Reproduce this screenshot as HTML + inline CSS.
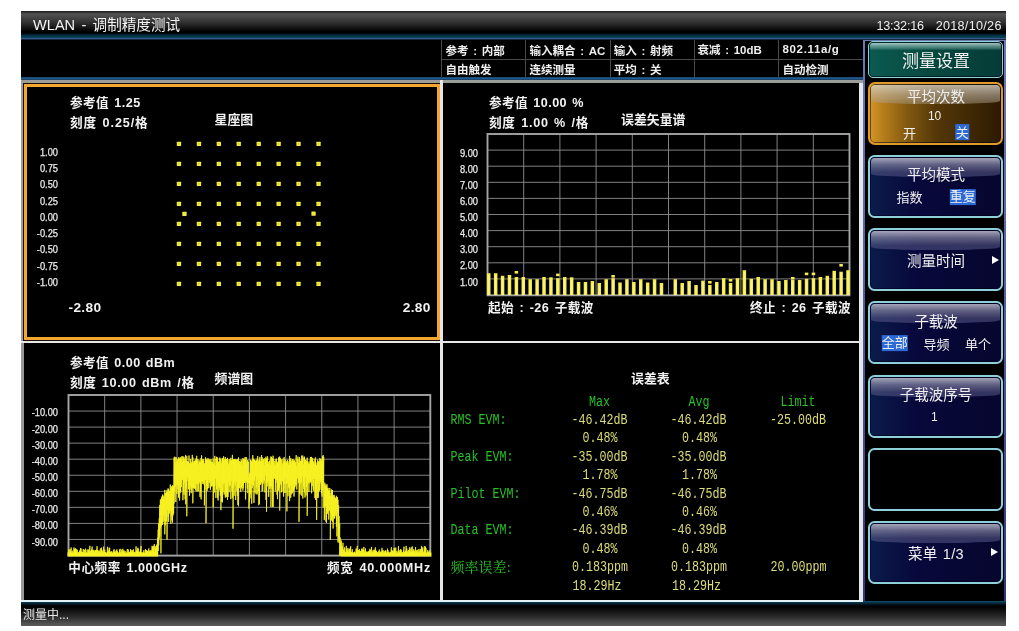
<!DOCTYPE html>
<html lang="zh-CN">
<head>
<meta charset="utf-8">
<title>WLAN - 调制精度测试</title>
<style>
html,body{margin:0;padding:0;background:#fff;}
body{width:1019px;height:631px;position:relative;overflow:hidden;font-family:"Liberation Sans","Noto Sans CJK SC",sans-serif;color:#fff;}
#scr{position:absolute;left:21px;top:11px;width:984.7px;height:614.7px;background:#000;overflow:hidden;will-change:transform;transform:translateZ(0);}
.a{position:absolute;}
.t{position:absolute;white-space:nowrap;line-height:1;}
#title{position:absolute;left:0;top:0;width:984.7px;height:29px;
 background:linear-gradient(to bottom,#161616 0,#2c2c2c 1px,#545252 3px,#4a4949 5.5px,#2e2e2e 12px,#141414 17px,#000 20.5px,#000 22px,#04283a 24px,#094056 26px,#0c4560 27px,#38598f 27.4px,#2c4a7c 28.2px,#000 28.8px);}
#title .tt{left:12px;top:6.8px;font-size:14.6px;color:#f4f4f4;word-spacing:2.2px;}
#title .tm{top:8.8px;font-size:12.6px;color:#eee;}
#info{position:absolute;left:0;top:29px;width:842px;height:37px;background:#000;}
#infoline{position:absolute;left:0;top:66px;width:842px;height:3px;background:linear-gradient(to bottom,#18426a,#21598a 50%,#143a5e);}
.ic{position:absolute;font-size:11.5px;word-spacing:1.5px;font-weight:bold;color:#f0f0f0;white-space:nowrap;line-height:1;}
.vl{position:absolute;width:1px;background:#4a4a4a;top:29px;height:37px;}
.hl{position:absolute;height:1px;background:#4a4a4a;left:420px;width:422px;top:48px;}
/* panels */
.pb{position:absolute;background:#000;}
.lab{font-size:12.6px;letter-spacing:.45px;word-spacing:1.2px;font-weight:bold;color:#f2f2f2;}
.ptitle{font-size:12.9px;font-weight:bold;color:#f2f2f2;}
.yl{position:absolute;font-size:10px;transform:scaleX(.93);-webkit-text-stroke:.25px #e8e8e8;transform-origin:100% 50%;color:#ececec;text-align:right;width:40px;line-height:1;white-space:nowrap;}
.xl{font-size:12.6px;letter-spacing:.45px;word-spacing:1.5px;font-weight:bold;color:#f2f2f2;}
/* sidebar */
#side{position:absolute;left:842px;top:29px;width:142.7px;height:560.7px;background:linear-gradient(to bottom,#6c7ab2,#5464a4 40%,#2c3a7c 100%);}#side i{position:absolute;left:2px;right:1.6px;top:1px;bottom:0;background:#000;}
.btn{position:absolute;left:847.4px;width:135px;height:63.2px;box-sizing:border-box;border:2px solid #8ed0d9;border-radius:6.5px;overflow:hidden;box-shadow:inset 0 0 0 1px rgba(0,0,20,.55);
 background:linear-gradient(to right,#0a1c4a 0,#08083c 35%,#06062e 100%);}
.btn .gl{position:absolute;left:1px;right:1px;top:1px;height:19px;background:linear-gradient(to bottom,rgba(180,180,198,.9) 0,rgba(135,135,165,.7) 35%,rgba(90,90,135,.55) 75%,rgba(80,80,130,.6) 100%);border-radius:4px 4px 40% 40% / 4px 4px 3px 3px;}
.btn .h{position:absolute;left:0;right:0;text-align:center;font-size:14.5px;color:#f0f0f0;line-height:1;white-space:nowrap;}
.btn .s{position:absolute;font-size:13px;color:#f0f0f0;line-height:1;white-space:nowrap;transform:translate(-50%,-50%);}
.btn .sel{background:#2c6ad8;padding:1.4px 0.2px;}
.arr{position:absolute;width:0;height:0;border-left:7px solid #fff;border-top:4.5px solid transparent;border-bottom:4.5px solid transparent;}
/* error table */
.et{position:absolute;font-family:"Liberation Mono","Noto Serif CJK SC",monospace;font-size:11.67px;line-height:1;white-space:pre;transform:scaleY(1.28);transform-origin:0 50%;}
.g{color:#28c028;}
.y{color:#dcdc78;}
#status{position:absolute;left:0;top:589.7px;width:984.7px;height:25px;background:linear-gradient(to bottom,#14506e 0,#0b3a50 1.2px,#062433 2.5px,#020c12 4px,#000 5.5px,#0a0a0a 8px,#2c2c2c 16px,#535353 23px,#5c5a5a 25px);}
#status .st{left:2px;top:8.1px;font-size:12px;color:#e8e8e8;}
</style>
</head>
<body>
<div id="scr">
  <div id="title"><div class="t tt">WLAN - 调制精度测试</div><div class="t tm" style="left:855.4px;letter-spacing:-.2px">13:32:16</div><div class="t tm" style="right:4px;letter-spacing:.3px">2018/10/26</div></div>
  <div id="info"></div>
  <div class="vl" style="left:420px"></div><div class="vl" style="left:504px"></div><div class="vl" style="left:589px"></div><div class="vl" style="left:673px"></div><div class="vl" style="left:757px"></div>
  <div class="hl"></div>
  <div class="ic" style="left:424.5px;top:34.5px">参考 : 内部</div>
  <div class="ic" style="left:424.5px;top:54px">自由触发</div>
  <div class="ic" style="left:508.5px;top:34.5px">输入耦合 : AC</div>
  <div class="ic" style="left:508.5px;top:54px">连续测量</div>
  <div class="ic" style="left:592.7px;top:34.5px">输入 : 射频</div>
  <div class="ic" style="left:592.7px;top:54px">平均 : 关</div>
  <div class="ic" style="left:676.5px;top:33.5px">衰减 : 10dB</div>
  <div class="ic" style="left:761.5px;top:33px;letter-spacing:.65px">802.11a/g</div>
  <div class="ic" style="left:761.5px;top:54px">自动检测</div>
  <div id="infoline"></div>

  <!-- panel frame: gray outer -->
  <div class="a" style="left:0;top:69px;width:842px;height:521.7px;background:#e6e6e6;"></div>
  <!-- panel 1 (selected) -->
  <div class="a" style="left:0;top:69px;width:419px;height:260.5px;background:#9c9c98;"></div>
  <div class="a" style="left:2px;top:72px;width:417px;height:257.5px;background:#1a0e08;"></div>
  <div class="a" style="left:3px;top:73px;width:415.5px;height:256px;background:#f2a72e;"></div>
  <div class="pb" style="left:6px;top:76px;width:409.5px;height:250px;"></div>
  <!-- panel 2 -->
  <div class="a" style="left:422px;top:69px;width:420px;height:3px;background:#9c9e9a;"></div>
  <div class="pb" style="left:422px;top:72px;width:416px;height:257.5px;"></div>
  <!-- panel 3 -->
  <div class="pb" style="left:2.6px;top:332px;width:416.4px;height:257.3px;"></div>
  <div class="a" style="left:0;top:332px;width:2.6px;height:257.3px;background:#989898;"></div>
  <!-- panel 4 -->
  <div class="pb" style="left:422px;top:332px;width:416px;height:257.3px;"></div>

  <!-- panel 1 content -->
  <div class="t lab" style="left:49px;top:86.1px">参考值 1.25</div>
  <div class="t lab" style="left:49px;top:106.1px;letter-spacing:.9px">刻度 0.25/格</div>
  <div class="t ptitle" style="left:193.5px;top:102.5px">星座图</div>
  <div class="yl" style="left:-2.7px;top:137.00px">1.00</div>
  <div class="yl" style="left:-2.7px;top:153.22px">0.75</div>
  <div class="yl" style="left:-2.7px;top:169.44px">0.50</div>
  <div class="yl" style="left:-2.7px;top:185.66px">0.25</div>
  <div class="yl" style="left:-2.7px;top:201.88px">0.00</div>
  <div class="yl" style="left:-2.7px;top:218.10px">-0.25</div>
  <div class="yl" style="left:-2.7px;top:234.32px">-0.50</div>
  <div class="yl" style="left:-2.7px;top:250.54px">-0.75</div>
  <div class="yl" style="left:-2.7px;top:266.76px">-1.00</div>
  <div class="t xl" style="left:47.5px;top:290.2px;font-size:13.7px;letter-spacing:.35px">-2.80</div>
  <div class="t xl" style="right:574.9px;top:290.2px;font-size:13.7px;letter-spacing:.35px">2.80</div>
  <svg class="a" style="left:-21px;top:-11px" width="1019" height="631" viewBox="0 0 1019 631">
<rect x="176.8" y="141.8" width="4.3" height="4.3" rx=".5" fill="#f3ec3e"/>
<rect x="178.4" y="143.1" width="1.2" height="1.6" fill="#d8cc2c"/>
<rect x="196.8" y="141.8" width="4.3" height="4.3" rx=".5" fill="#f3ec3e"/>
<rect x="198.3" y="143.1" width="1.2" height="1.6" fill="#d8cc2c"/>
<rect x="216.7" y="141.8" width="4.3" height="4.3" rx=".5" fill="#f3ec3e"/>
<rect x="218.3" y="143.1" width="1.2" height="1.6" fill="#d8cc2c"/>
<rect x="236.6" y="141.8" width="4.3" height="4.3" rx=".5" fill="#f3ec3e"/>
<rect x="238.2" y="143.1" width="1.2" height="1.6" fill="#d8cc2c"/>
<rect x="256.6" y="141.8" width="4.3" height="4.3" rx=".5" fill="#f3ec3e"/>
<rect x="258.1" y="143.1" width="1.2" height="1.6" fill="#d8cc2c"/>
<rect x="276.5" y="141.8" width="4.3" height="4.3" rx=".5" fill="#f3ec3e"/>
<rect x="278.0" y="143.1" width="1.2" height="1.6" fill="#d8cc2c"/>
<rect x="296.4" y="141.8" width="4.3" height="4.3" rx=".5" fill="#f3ec3e"/>
<rect x="298.0" y="143.1" width="1.2" height="1.6" fill="#d8cc2c"/>
<rect x="316.4" y="141.8" width="4.3" height="4.3" rx=".5" fill="#f3ec3e"/>
<rect x="317.9" y="143.1" width="1.2" height="1.6" fill="#d8cc2c"/>
<rect x="176.8" y="161.8" width="4.3" height="4.3" rx=".5" fill="#f3ec3e"/>
<rect x="178.4" y="163.1" width="1.2" height="1.6" fill="#d8cc2c"/>
<rect x="196.8" y="161.8" width="4.3" height="4.3" rx=".5" fill="#f3ec3e"/>
<rect x="198.3" y="163.1" width="1.2" height="1.6" fill="#d8cc2c"/>
<rect x="216.7" y="161.8" width="4.3" height="4.3" rx=".5" fill="#f3ec3e"/>
<rect x="218.3" y="163.1" width="1.2" height="1.6" fill="#d8cc2c"/>
<rect x="236.6" y="161.8" width="4.3" height="4.3" rx=".5" fill="#f3ec3e"/>
<rect x="238.2" y="163.1" width="1.2" height="1.6" fill="#d8cc2c"/>
<rect x="256.6" y="161.8" width="4.3" height="4.3" rx=".5" fill="#f3ec3e"/>
<rect x="258.1" y="163.1" width="1.2" height="1.6" fill="#d8cc2c"/>
<rect x="276.5" y="161.8" width="4.3" height="4.3" rx=".5" fill="#f3ec3e"/>
<rect x="278.0" y="163.1" width="1.2" height="1.6" fill="#d8cc2c"/>
<rect x="296.4" y="161.8" width="4.3" height="4.3" rx=".5" fill="#f3ec3e"/>
<rect x="298.0" y="163.1" width="1.2" height="1.6" fill="#d8cc2c"/>
<rect x="316.4" y="161.8" width="4.3" height="4.3" rx=".5" fill="#f3ec3e"/>
<rect x="317.9" y="163.1" width="1.2" height="1.6" fill="#d8cc2c"/>
<rect x="176.8" y="181.8" width="4.3" height="4.3" rx=".5" fill="#f3ec3e"/>
<rect x="178.4" y="183.1" width="1.2" height="1.6" fill="#d8cc2c"/>
<rect x="196.8" y="181.8" width="4.3" height="4.3" rx=".5" fill="#f3ec3e"/>
<rect x="198.3" y="183.1" width="1.2" height="1.6" fill="#d8cc2c"/>
<rect x="216.7" y="181.8" width="4.3" height="4.3" rx=".5" fill="#f3ec3e"/>
<rect x="218.3" y="183.1" width="1.2" height="1.6" fill="#d8cc2c"/>
<rect x="236.6" y="181.8" width="4.3" height="4.3" rx=".5" fill="#f3ec3e"/>
<rect x="238.2" y="183.1" width="1.2" height="1.6" fill="#d8cc2c"/>
<rect x="256.6" y="181.8" width="4.3" height="4.3" rx=".5" fill="#f3ec3e"/>
<rect x="258.1" y="183.1" width="1.2" height="1.6" fill="#d8cc2c"/>
<rect x="276.5" y="181.8" width="4.3" height="4.3" rx=".5" fill="#f3ec3e"/>
<rect x="278.0" y="183.1" width="1.2" height="1.6" fill="#d8cc2c"/>
<rect x="296.4" y="181.8" width="4.3" height="4.3" rx=".5" fill="#f3ec3e"/>
<rect x="298.0" y="183.1" width="1.2" height="1.6" fill="#d8cc2c"/>
<rect x="316.4" y="181.8" width="4.3" height="4.3" rx=".5" fill="#f3ec3e"/>
<rect x="317.9" y="183.1" width="1.2" height="1.6" fill="#d8cc2c"/>
<rect x="176.8" y="201.8" width="4.3" height="4.3" rx=".5" fill="#f3ec3e"/>
<rect x="178.4" y="203.1" width="1.2" height="1.6" fill="#d8cc2c"/>
<rect x="196.8" y="201.8" width="4.3" height="4.3" rx=".5" fill="#f3ec3e"/>
<rect x="198.3" y="203.1" width="1.2" height="1.6" fill="#d8cc2c"/>
<rect x="216.7" y="201.8" width="4.3" height="4.3" rx=".5" fill="#f3ec3e"/>
<rect x="218.3" y="203.1" width="1.2" height="1.6" fill="#d8cc2c"/>
<rect x="236.6" y="201.8" width="4.3" height="4.3" rx=".5" fill="#f3ec3e"/>
<rect x="238.2" y="203.1" width="1.2" height="1.6" fill="#d8cc2c"/>
<rect x="256.6" y="201.8" width="4.3" height="4.3" rx=".5" fill="#f3ec3e"/>
<rect x="258.1" y="203.1" width="1.2" height="1.6" fill="#d8cc2c"/>
<rect x="276.5" y="201.8" width="4.3" height="4.3" rx=".5" fill="#f3ec3e"/>
<rect x="278.0" y="203.1" width="1.2" height="1.6" fill="#d8cc2c"/>
<rect x="296.4" y="201.8" width="4.3" height="4.3" rx=".5" fill="#f3ec3e"/>
<rect x="298.0" y="203.1" width="1.2" height="1.6" fill="#d8cc2c"/>
<rect x="316.4" y="201.8" width="4.3" height="4.3" rx=".5" fill="#f3ec3e"/>
<rect x="317.9" y="203.1" width="1.2" height="1.6" fill="#d8cc2c"/>
<rect x="176.8" y="221.8" width="4.3" height="4.3" rx=".5" fill="#f3ec3e"/>
<rect x="178.4" y="223.1" width="1.2" height="1.6" fill="#d8cc2c"/>
<rect x="196.8" y="221.8" width="4.3" height="4.3" rx=".5" fill="#f3ec3e"/>
<rect x="198.3" y="223.1" width="1.2" height="1.6" fill="#d8cc2c"/>
<rect x="216.7" y="221.8" width="4.3" height="4.3" rx=".5" fill="#f3ec3e"/>
<rect x="218.3" y="223.1" width="1.2" height="1.6" fill="#d8cc2c"/>
<rect x="236.6" y="221.8" width="4.3" height="4.3" rx=".5" fill="#f3ec3e"/>
<rect x="238.2" y="223.1" width="1.2" height="1.6" fill="#d8cc2c"/>
<rect x="256.6" y="221.8" width="4.3" height="4.3" rx=".5" fill="#f3ec3e"/>
<rect x="258.1" y="223.1" width="1.2" height="1.6" fill="#d8cc2c"/>
<rect x="276.5" y="221.8" width="4.3" height="4.3" rx=".5" fill="#f3ec3e"/>
<rect x="278.0" y="223.1" width="1.2" height="1.6" fill="#d8cc2c"/>
<rect x="296.4" y="221.8" width="4.3" height="4.3" rx=".5" fill="#f3ec3e"/>
<rect x="298.0" y="223.1" width="1.2" height="1.6" fill="#d8cc2c"/>
<rect x="316.4" y="221.8" width="4.3" height="4.3" rx=".5" fill="#f3ec3e"/>
<rect x="317.9" y="223.1" width="1.2" height="1.6" fill="#d8cc2c"/>
<rect x="176.8" y="241.8" width="4.3" height="4.3" rx=".5" fill="#f3ec3e"/>
<rect x="178.4" y="243.1" width="1.2" height="1.6" fill="#d8cc2c"/>
<rect x="196.8" y="241.8" width="4.3" height="4.3" rx=".5" fill="#f3ec3e"/>
<rect x="198.3" y="243.1" width="1.2" height="1.6" fill="#d8cc2c"/>
<rect x="216.7" y="241.8" width="4.3" height="4.3" rx=".5" fill="#f3ec3e"/>
<rect x="218.3" y="243.1" width="1.2" height="1.6" fill="#d8cc2c"/>
<rect x="236.6" y="241.8" width="4.3" height="4.3" rx=".5" fill="#f3ec3e"/>
<rect x="238.2" y="243.1" width="1.2" height="1.6" fill="#d8cc2c"/>
<rect x="256.6" y="241.8" width="4.3" height="4.3" rx=".5" fill="#f3ec3e"/>
<rect x="258.1" y="243.1" width="1.2" height="1.6" fill="#d8cc2c"/>
<rect x="276.5" y="241.8" width="4.3" height="4.3" rx=".5" fill="#f3ec3e"/>
<rect x="278.0" y="243.1" width="1.2" height="1.6" fill="#d8cc2c"/>
<rect x="296.4" y="241.8" width="4.3" height="4.3" rx=".5" fill="#f3ec3e"/>
<rect x="298.0" y="243.1" width="1.2" height="1.6" fill="#d8cc2c"/>
<rect x="316.4" y="241.8" width="4.3" height="4.3" rx=".5" fill="#f3ec3e"/>
<rect x="317.9" y="243.1" width="1.2" height="1.6" fill="#d8cc2c"/>
<rect x="176.8" y="261.8" width="4.3" height="4.3" rx=".5" fill="#f3ec3e"/>
<rect x="178.4" y="263.1" width="1.2" height="1.6" fill="#d8cc2c"/>
<rect x="196.8" y="261.8" width="4.3" height="4.3" rx=".5" fill="#f3ec3e"/>
<rect x="198.3" y="263.1" width="1.2" height="1.6" fill="#d8cc2c"/>
<rect x="216.7" y="261.8" width="4.3" height="4.3" rx=".5" fill="#f3ec3e"/>
<rect x="218.3" y="263.1" width="1.2" height="1.6" fill="#d8cc2c"/>
<rect x="236.6" y="261.8" width="4.3" height="4.3" rx=".5" fill="#f3ec3e"/>
<rect x="238.2" y="263.1" width="1.2" height="1.6" fill="#d8cc2c"/>
<rect x="256.6" y="261.8" width="4.3" height="4.3" rx=".5" fill="#f3ec3e"/>
<rect x="258.1" y="263.1" width="1.2" height="1.6" fill="#d8cc2c"/>
<rect x="276.5" y="261.8" width="4.3" height="4.3" rx=".5" fill="#f3ec3e"/>
<rect x="278.0" y="263.1" width="1.2" height="1.6" fill="#d8cc2c"/>
<rect x="296.4" y="261.8" width="4.3" height="4.3" rx=".5" fill="#f3ec3e"/>
<rect x="298.0" y="263.1" width="1.2" height="1.6" fill="#d8cc2c"/>
<rect x="316.4" y="261.8" width="4.3" height="4.3" rx=".5" fill="#f3ec3e"/>
<rect x="317.9" y="263.1" width="1.2" height="1.6" fill="#d8cc2c"/>
<rect x="176.8" y="281.8" width="4.3" height="4.3" rx=".5" fill="#f3ec3e"/>
<rect x="178.4" y="283.1" width="1.2" height="1.6" fill="#d8cc2c"/>
<rect x="196.8" y="281.8" width="4.3" height="4.3" rx=".5" fill="#f3ec3e"/>
<rect x="198.3" y="283.1" width="1.2" height="1.6" fill="#d8cc2c"/>
<rect x="216.7" y="281.8" width="4.3" height="4.3" rx=".5" fill="#f3ec3e"/>
<rect x="218.3" y="283.1" width="1.2" height="1.6" fill="#d8cc2c"/>
<rect x="236.6" y="281.8" width="4.3" height="4.3" rx=".5" fill="#f3ec3e"/>
<rect x="238.2" y="283.1" width="1.2" height="1.6" fill="#d8cc2c"/>
<rect x="256.6" y="281.8" width="4.3" height="4.3" rx=".5" fill="#f3ec3e"/>
<rect x="258.1" y="283.1" width="1.2" height="1.6" fill="#d8cc2c"/>
<rect x="276.5" y="281.8" width="4.3" height="4.3" rx=".5" fill="#f3ec3e"/>
<rect x="278.0" y="283.1" width="1.2" height="1.6" fill="#d8cc2c"/>
<rect x="296.4" y="281.8" width="4.3" height="4.3" rx=".5" fill="#f3ec3e"/>
<rect x="298.0" y="283.1" width="1.2" height="1.6" fill="#d8cc2c"/>
<rect x="316.4" y="281.8" width="4.3" height="4.3" rx=".5" fill="#f3ec3e"/>
<rect x="317.9" y="283.1" width="1.2" height="1.6" fill="#d8cc2c"/>
<rect x="182.3" y="211.7" width="4.3" height="4.3" rx=".5" fill="#f3ec3e"/>
<rect x="311.4" y="211.4" width="4.3" height="4.3" rx=".5" fill="#f3ec3e"/>
  </svg>

  <!-- panel 2 content -->
  <div class="t lab" style="left:468px;top:86.1px">参考值 10.00 %</div>
  <div class="t lab" style="left:468px;top:106.1px;letter-spacing:.75px">刻度 1.00 % /格</div>
  <div class="t ptitle" style="left:600px;top:103.3px">误差矢量谱</div>
  <div class="yl" style="left:416.7px;top:137.50px">9.00</div>
  <div class="yl" style="left:416.7px;top:153.62px">8.00</div>
  <div class="yl" style="left:416.7px;top:169.75px">7.00</div>
  <div class="yl" style="left:416.7px;top:185.88px">6.00</div>
  <div class="yl" style="left:416.7px;top:202.00px">5.00</div>
  <div class="yl" style="left:416.7px;top:218.12px">4.00</div>
  <div class="yl" style="left:416.7px;top:234.25px">3.00</div>
  <div class="yl" style="left:416.7px;top:250.38px">2.00</div>
  <div class="yl" style="left:416.7px;top:266.50px">1.00</div>
  <svg class="a" style="left:464px;top:121px" width="370" height="166" viewBox="-2.5 -2 370 166">
    <g stroke="#8e8e8e" stroke-width="0.9" fill="none">
      <path d="M0 16.1H362M0 32.2H362M0 48.3H362M0 64.4H362M0 80.5H362M0 96.6H362M0 112.7H362M0 128.8H362M0 144.9H362"/>
      <path d="M36.2 0V161M72.4 0V161M108.6 0V161M144.8 0V161M181 0V161M217.2 0V161M253.4 0V161M289.6 0V161M325.8 0V161"/>
    </g>
    <rect x="0" y="0" width="362" height="161.3" fill="none" stroke="#a4a4a4" stroke-width="1.9"/>
<rect x="-0.50" y="139.20" width="3.5" height="21.80" fill="#f4ec4a"/>
<rect x="0.60" y="141.20" width="1.3" height="19.80" fill="#f8f488"/>
<rect x="6.41" y="139.20" width="3.5" height="21.80" fill="#f4ec4a"/>
<rect x="7.51" y="141.20" width="1.3" height="19.80" fill="#f8f488"/>
<rect x="13.32" y="141.80" width="3.5" height="19.20" fill="#f4ec4a"/>
<rect x="14.42" y="143.80" width="1.3" height="17.20" fill="#f8f488"/>
<rect x="20.23" y="141.00" width="3.5" height="20.00" fill="#f4ec4a"/>
<rect x="21.33" y="143.00" width="1.3" height="18.00" fill="#f8f488"/>
<rect x="27.14" y="143.00" width="3.5" height="18.00" fill="#f4ec4a"/>
<rect x="28.24" y="145.00" width="1.3" height="16.00" fill="#f8f488"/>
<rect x="27.14" y="137.00" width="3.5" height="2.6" fill="#f4ec4a"/>
<rect x="34.05" y="143.00" width="3.5" height="18.00" fill="#f4ec4a"/>
<rect x="35.15" y="145.00" width="1.3" height="16.00" fill="#f8f488"/>
<rect x="40.95" y="145.20" width="3.5" height="15.80" fill="#f4ec4a"/>
<rect x="42.05" y="147.20" width="1.3" height="13.80" fill="#f8f488"/>
<rect x="47.86" y="145.20" width="3.5" height="15.80" fill="#f4ec4a"/>
<rect x="48.96" y="147.20" width="1.3" height="13.80" fill="#f8f488"/>
<rect x="54.77" y="143.00" width="3.5" height="18.00" fill="#f4ec4a"/>
<rect x="55.87" y="145.00" width="1.3" height="16.00" fill="#f8f488"/>
<rect x="61.68" y="143.30" width="3.5" height="17.70" fill="#f4ec4a"/>
<rect x="62.78" y="145.30" width="1.3" height="15.70" fill="#f8f488"/>
<rect x="68.59" y="144.20" width="3.5" height="16.80" fill="#f4ec4a"/>
<rect x="69.69" y="146.20" width="1.3" height="14.80" fill="#f8f488"/>
<rect x="68.59" y="139.60" width="3.5" height="2.6" fill="#f4ec4a"/>
<rect x="75.50" y="143.00" width="3.5" height="18.00" fill="#f4ec4a"/>
<rect x="76.60" y="145.00" width="1.3" height="16.00" fill="#f8f488"/>
<rect x="82.41" y="143.30" width="3.5" height="17.70" fill="#f4ec4a"/>
<rect x="83.51" y="145.30" width="1.3" height="15.70" fill="#f8f488"/>
<rect x="89.32" y="148.00" width="3.5" height="13.00" fill="#f4ec4a"/>
<rect x="90.42" y="150.00" width="1.3" height="11.00" fill="#f8f488"/>
<rect x="96.23" y="148.00" width="3.5" height="13.00" fill="#f4ec4a"/>
<rect x="97.33" y="150.00" width="1.3" height="11.00" fill="#f8f488"/>
<rect x="103.13" y="147.00" width="3.5" height="14.00" fill="#f4ec4a"/>
<rect x="104.23" y="149.00" width="1.3" height="12.00" fill="#f8f488"/>
<rect x="110.04" y="149.00" width="3.5" height="12.00" fill="#f4ec4a"/>
<rect x="111.14" y="151.00" width="1.3" height="10.00" fill="#f8f488"/>
<rect x="116.95" y="145.20" width="3.5" height="15.80" fill="#f4ec4a"/>
<rect x="118.05" y="147.20" width="1.3" height="13.80" fill="#f8f488"/>
<rect x="123.86" y="144.20" width="3.5" height="16.80" fill="#f4ec4a"/>
<rect x="124.96" y="146.20" width="1.3" height="14.80" fill="#f8f488"/>
<rect x="123.86" y="141.00" width="3.5" height="2.6" fill="#f4ec4a"/>
<rect x="130.77" y="148.50" width="3.5" height="12.50" fill="#f4ec4a"/>
<rect x="131.87" y="150.50" width="1.3" height="10.50" fill="#f8f488"/>
<rect x="137.68" y="145.20" width="3.5" height="15.80" fill="#f4ec4a"/>
<rect x="138.78" y="147.20" width="1.3" height="13.80" fill="#f8f488"/>
<rect x="144.59" y="148.00" width="3.5" height="13.00" fill="#f4ec4a"/>
<rect x="145.69" y="150.00" width="1.3" height="11.00" fill="#f8f488"/>
<rect x="151.50" y="145.20" width="3.5" height="15.80" fill="#f4ec4a"/>
<rect x="152.60" y="147.20" width="1.3" height="13.80" fill="#f8f488"/>
<rect x="158.41" y="148.50" width="3.5" height="12.50" fill="#f4ec4a"/>
<rect x="159.51" y="150.50" width="1.3" height="10.50" fill="#f8f488"/>
<rect x="165.32" y="145.20" width="3.5" height="15.80" fill="#f4ec4a"/>
<rect x="166.42" y="147.20" width="1.3" height="13.80" fill="#f8f488"/>
<rect x="172.22" y="149.00" width="3.5" height="12.00" fill="#f4ec4a"/>
<rect x="173.32" y="151.00" width="1.3" height="10.00" fill="#f8f488"/>
<rect x="186.04" y="145.20" width="3.5" height="15.80" fill="#f4ec4a"/>
<rect x="187.14" y="147.20" width="1.3" height="13.80" fill="#f8f488"/>
<rect x="192.95" y="149.00" width="3.5" height="12.00" fill="#f4ec4a"/>
<rect x="194.05" y="151.00" width="1.3" height="10.00" fill="#f8f488"/>
<rect x="199.86" y="147.00" width="3.5" height="14.00" fill="#f4ec4a"/>
<rect x="200.96" y="149.00" width="1.3" height="12.00" fill="#f8f488"/>
<rect x="206.77" y="151.00" width="3.5" height="10.00" fill="#f4ec4a"/>
<rect x="207.87" y="153.00" width="1.3" height="8.00" fill="#f8f488"/>
<rect x="213.68" y="146.60" width="3.5" height="14.40" fill="#f4ec4a"/>
<rect x="214.78" y="148.60" width="1.3" height="12.40" fill="#f8f488"/>
<rect x="220.59" y="151.00" width="3.5" height="10.00" fill="#f4ec4a"/>
<rect x="221.69" y="153.00" width="1.3" height="8.00" fill="#f8f488"/>
<rect x="220.59" y="147.00" width="3.5" height="2.6" fill="#f4ec4a"/>
<rect x="227.50" y="148.00" width="3.5" height="13.00" fill="#f4ec4a"/>
<rect x="228.60" y="150.00" width="1.3" height="11.00" fill="#f8f488"/>
<rect x="234.41" y="144.20" width="3.5" height="16.80" fill="#f4ec4a"/>
<rect x="235.51" y="146.20" width="1.3" height="14.80" fill="#f8f488"/>
<rect x="241.31" y="149.00" width="3.5" height="12.00" fill="#f4ec4a"/>
<rect x="242.41" y="151.00" width="1.3" height="10.00" fill="#f8f488"/>
<rect x="241.31" y="145.00" width="3.5" height="2.6" fill="#f4ec4a"/>
<rect x="248.22" y="144.20" width="3.5" height="16.80" fill="#f4ec4a"/>
<rect x="249.32" y="146.20" width="1.3" height="14.80" fill="#f8f488"/>
<rect x="255.13" y="136.20" width="3.5" height="24.80" fill="#f4ec4a"/>
<rect x="256.23" y="138.20" width="1.3" height="22.80" fill="#f8f488"/>
<rect x="262.04" y="144.80" width="3.5" height="16.20" fill="#f4ec4a"/>
<rect x="263.14" y="146.80" width="1.3" height="14.20" fill="#f8f488"/>
<rect x="268.95" y="143.00" width="3.5" height="18.00" fill="#f4ec4a"/>
<rect x="270.05" y="145.00" width="1.3" height="16.00" fill="#f8f488"/>
<rect x="275.86" y="145.20" width="3.5" height="15.80" fill="#f4ec4a"/>
<rect x="276.96" y="147.20" width="1.3" height="13.80" fill="#f8f488"/>
<rect x="282.77" y="145.20" width="3.5" height="15.80" fill="#f4ec4a"/>
<rect x="283.87" y="147.20" width="1.3" height="13.80" fill="#f8f488"/>
<rect x="289.68" y="147.00" width="3.5" height="14.00" fill="#f4ec4a"/>
<rect x="290.78" y="149.00" width="1.3" height="12.00" fill="#f8f488"/>
<rect x="296.59" y="146.00" width="3.5" height="15.00" fill="#f4ec4a"/>
<rect x="297.69" y="148.00" width="1.3" height="13.00" fill="#f8f488"/>
<rect x="303.50" y="146.00" width="3.5" height="15.00" fill="#f4ec4a"/>
<rect x="304.60" y="148.00" width="1.3" height="13.00" fill="#f8f488"/>
<rect x="303.50" y="143.00" width="3.5" height="2.6" fill="#f4ec4a"/>
<rect x="310.40" y="146.00" width="3.5" height="15.00" fill="#f4ec4a"/>
<rect x="311.50" y="148.00" width="1.3" height="13.00" fill="#f8f488"/>
<rect x="317.31" y="144.80" width="3.5" height="16.20" fill="#f4ec4a"/>
<rect x="318.41" y="146.80" width="1.3" height="14.20" fill="#f8f488"/>
<rect x="317.31" y="138.60" width="3.5" height="2.6" fill="#f4ec4a"/>
<rect x="324.22" y="144.20" width="3.5" height="16.80" fill="#f4ec4a"/>
<rect x="325.32" y="146.20" width="1.3" height="14.80" fill="#f8f488"/>
<rect x="324.22" y="138.60" width="3.5" height="2.6" fill="#f4ec4a"/>
<rect x="331.13" y="143.00" width="3.5" height="18.00" fill="#f4ec4a"/>
<rect x="332.23" y="145.00" width="1.3" height="16.00" fill="#f8f488"/>
<rect x="338.04" y="141.80" width="3.5" height="19.20" fill="#f4ec4a"/>
<rect x="339.14" y="143.80" width="1.3" height="17.20" fill="#f8f488"/>
<rect x="344.95" y="136.80" width="3.5" height="24.20" fill="#f4ec4a"/>
<rect x="346.05" y="138.80" width="1.3" height="22.20" fill="#f8f488"/>
<rect x="351.86" y="137.70" width="3.5" height="23.30" fill="#f4ec4a"/>
<rect x="352.96" y="139.70" width="1.3" height="21.30" fill="#f8f488"/>
<rect x="351.86" y="130.00" width="3.5" height="2.6" fill="#f4ec4a"/>
<rect x="358.77" y="136.20" width="3.5" height="24.80" fill="#f4ec4a"/>
<rect x="359.87" y="138.20" width="1.3" height="22.80" fill="#f8f488"/>
  </svg>
  <div class="t xl" style="left:467px;top:291px">起始 : -26 子载波</div>
  <div class="t xl" style="left:729px;top:291px">终止 : 26 子载波</div>

  <!-- panel 3 content -->
  <div class="t lab" style="left:49px;top:346px">参考值 0.00 dBm</div>
  <div class="t lab" style="left:49px;top:366px;letter-spacing:.65px">刻度 10.00 dBm /格</div>
  <div class="t ptitle" style="left:193.5px;top:362.2px">频谱图</div>
  <div class="yl" style="left:-2.7px;top:397.40px">-10.00</div>
  <div class="yl" style="left:-2.7px;top:413.54px">-20.00</div>
  <div class="yl" style="left:-2.7px;top:429.68px">-30.00</div>
  <div class="yl" style="left:-2.7px;top:445.82px">-40.00</div>
  <div class="yl" style="left:-2.7px;top:461.96px">-50.00</div>
  <div class="yl" style="left:-2.7px;top:478.10px">-60.00</div>
  <div class="yl" style="left:-2.7px;top:494.24px">-70.00</div>
  <div class="yl" style="left:-2.7px;top:510.38px">-80.00</div>
  <div class="yl" style="left:-2.7px;top:526.52px">-90.00</div>
  <svg class="a" style="left:45px;top:381.75px" width="370" height="166" viewBox="-2.5 -2 370 166">
    <g stroke="#8e8e8e" stroke-width="0.9" fill="none">
      <path d="M0 16.05H361.8M0 32.1H361.8M0 48.15H361.8M0 64.2H361.8M0 80.25H361.8M0 96.3H361.8M0 112.35H361.8M0 128.4H361.8M0 144.45H361.8"/>
      <path d="M36.18 0V160.5M72.36 0V160.5M108.54 0V160.5M144.72 0V160.5M180.9 0V160.5M217.08 0V160.5M253.26 0V160.5M289.44 0V160.5M325.62 0V160.5"/>
    </g>
    <rect x="0" y="0" width="361.8" height="160.6" fill="none" stroke="#a4a4a4" stroke-width="1.9"/>
    <path d="M0.0 159.8 L0.0 160.5 L0.5 154.5 L0.5 160.5 L1.1 160.5 L1.1 160.5 L1.6 154.2 L1.6 160.5 L2.2 156.3 L2.2 160.5 L2.7 152.5 L2.7 160.5 L3.3 158.4 L3.3 160.5 L3.8 155.7 L3.8 160.5 L4.4 157.9 L4.4 160.5 L4.9 158.6 L4.9 160.5 L5.5 152.5 L5.5 160.5 L6.0 154.3 L6.0 160.5 L6.6 153.7 L6.6 160.5 L7.1 153.3 L7.1 160.5 L7.7 157.6 L7.7 160.5 L8.2 154.2 L8.2 160.5 L8.8 154.9 L8.8 160.5 L9.3 157.3 L9.3 160.5 L9.9 160.4 L9.9 160.5 L10.4 157.5 L10.4 160.5 L11.0 156.4 L11.0 160.5 L11.5 155.1 L11.5 160.5 L12.1 153.1 L12.1 160.5 L12.6 153.7 L12.6 160.5 L13.2 156.6 L13.2 160.5 L13.7 157.0 L13.7 160.5 L14.3 160.5 L14.3 160.5 L14.8 154.0 L14.8 160.5 L15.4 159.5 L15.4 160.5 L15.9 154.8 L15.9 160.5 L16.5 160.5 L16.5 160.5 L17.0 153.7 L17.0 160.5 L17.6 158.1 L17.6 160.5 L18.1 159.6 L18.1 160.5 L18.7 154.6 L18.7 160.5 L19.2 160.5 L19.2 160.5 L19.8 154.4 L19.8 160.5 L20.3 155.1 L20.3 160.5 L20.9 158.0 L20.9 160.5 L21.4 150.9 L21.4 160.5 L22.0 155.8 L22.0 160.5 L22.5 156.5 L22.5 160.5 L23.1 154.5 L23.1 160.5 L23.6 151.6 L23.6 160.5 L24.2 155.1 L24.2 160.5 L24.7 155.9 L24.7 160.5 L25.3 154.8 L25.3 160.5 L25.8 157.3 L25.8 160.5 L26.4 155.6 L26.4 160.5 L26.9 155.5 L26.9 160.5 L27.5 155.0 L27.5 160.5 L28.0 154.7 L28.0 160.5 L28.6 151.2 L28.6 160.5 L29.1 155.3 L29.1 160.5 L29.7 157.3 L29.7 160.5 L30.2 155.7 L30.2 160.5 L30.8 155.7 L30.8 160.5 L31.3 159.9 L31.3 160.5 L31.9 153.4 L31.9 160.5 L32.4 159.3 L32.4 160.5 L33.0 152.7 L33.0 160.5 L33.5 154.8 L33.5 160.5 L34.1 156.3 L34.1 160.5 L34.6 160.5 L34.6 160.5 L35.2 151.6 L35.2 160.5 L35.7 157.6 L35.7 160.5 L36.3 154.6 L36.3 160.5 L36.8 157.0 L36.8 160.5 L37.4 158.0 L37.4 160.5 L37.9 160.5 L37.9 160.5 L38.5 160.5 L38.5 160.5 L39.0 151.8 L39.0 160.5 L39.6 155.7 L39.6 160.5 L40.1 156.6 L40.1 160.5 L40.7 152.6 L40.7 160.5 L41.2 153.0 L41.2 160.5 L41.8 158.0 L41.8 160.5 L42.3 156.6 L42.3 160.5 L42.9 156.6 L42.9 160.5 L43.4 156.5 L43.4 160.5 L44.0 158.2 L44.0 160.5 L44.5 159.4 L44.5 160.5 L45.1 155.3 L45.1 160.5 L45.6 154.3 L45.6 160.5 L46.2 156.9 L46.2 160.5 L46.7 156.3 L46.7 160.5 L47.3 159.3 L47.3 160.5 L47.8 155.3 L47.8 160.5 L48.4 154.4 L48.4 160.5 L48.9 156.3 L48.9 160.5 L49.5 158.2 L49.5 160.5 L50.0 157.9 L50.0 160.5 L50.6 158.3 L50.6 160.5 L51.1 154.6 L51.1 160.5 L51.7 153.8 L51.7 160.5 L52.2 157.6 L52.2 160.5 L52.8 159.2 L52.8 160.5 L53.3 154.6 L53.3 160.5 L53.9 156.2 L53.9 160.5 L54.4 153.8 L54.4 160.5 L55.0 156.5 L55.0 160.5 L55.5 155.3 L55.5 160.5 L56.1 159.2 L56.1 160.5 L56.6 156.0 L56.6 160.5 L57.2 157.8 L57.2 160.5 L57.7 158.1 L57.7 160.5 L58.3 158.9 L58.3 160.5 L58.8 154.0 L58.8 160.5 L59.4 158.0 L59.4 160.5 L59.9 154.6 L59.9 160.5 L60.5 157.2 L60.5 160.5 L61.0 157.6 L61.0 160.5 L61.6 156.7 L61.6 160.5 L62.1 154.1 L62.1 160.5 L62.7 155.2 L62.7 160.5 L63.2 156.8 L63.2 160.5 L63.8 155.3 L63.8 160.5 L64.3 156.3 L64.3 160.5 L64.9 154.4 L64.9 160.5 L65.4 158.0 L65.4 160.5 L66.0 157.5 L66.0 160.5 L66.5 156.8 L66.5 160.5 L67.1 158.0 L67.1 160.5 L67.6 151.4 L67.6 160.5 L68.2 155.4 L68.2 160.5 L68.7 155.6 L68.7 160.5 L69.3 152.8 L69.3 160.5 L69.8 153.7 L69.8 160.5 L70.4 157.0 L70.4 160.5 L70.9 156.7 L70.9 160.5 L71.5 158.7 L71.5 160.5 L72.0 154.3 L72.0 160.5 L72.6 150.9 L72.6 160.5 L73.1 157.5 L73.1 160.5 L73.7 160.1 L73.7 160.5 L74.2 157.6 L74.2 160.5 L74.8 158.9 L74.8 160.5 L75.4 155.1 L75.4 160.5 L75.9 158.8 L75.9 160.5 L76.5 159.0 L76.5 160.5 L77.0 154.1 L77.0 160.5 L77.6 155.7 L77.6 160.5 L78.1 155.0 L78.1 160.5 L78.7 156.0 L78.7 160.5 L79.2 155.8 L79.2 160.5 L79.8 159.5 L79.8 160.5 L80.3 153.4 L80.3 160.5 L80.9 155.6 L80.9 160.5 L81.4 157.4 L81.4 160.5 L82.0 155.4 L82.0 160.5 L82.5 159.3 L82.5 160.5 L83.1 155.6 L83.1 160.5 L83.6 150.9 L83.6 160.5 L84.2 151.6 L84.2 160.5 L84.7 152.1 L84.7 160.5 L85.3 150.8 L85.3 160.5 L85.8 149.1 L85.8 160.5 L86.4 156.9 L86.4 160.5 L86.9 151.9 L86.9 160.5 L87.5 151.1 L87.5 160.5 L88.0 149.7 L88.0 160.5 L88.6 154.0 L88.6 160.5 L89.1 142.8 L89.1 160.5 L89.7 134.5 L89.7 155.9 L90.2 128.5 L90.2 150.3 L90.8 123.2 L90.8 143.5 L91.3 110.0 L91.3 140.6 L91.9 104.3 L91.9 132.8 L92.4 105.7 L92.4 158.3 L93.0 103.1 L93.0 131.2 L93.5 101.3 L93.5 128.9 L94.1 99.5 L94.1 129.9 L94.6 100.6 L94.6 127.1 L95.2 101.7 L95.2 120.2 L95.7 105.2 L95.7 125.9 L96.3 94.9 L96.3 139.3 L96.8 98.3 L96.8 130.3 L97.4 98.1 L97.4 116.6 L97.9 96.8 L97.9 126.3 L98.5 94.9 L98.5 144.6 L99.0 97.1 L99.0 115.0 L99.6 93.4 L99.6 121.9 L100.1 94.1 L100.1 126.8 L100.7 95.8 L100.7 117.4 L101.2 96.0 L101.2 118.7 L101.8 89.5 L101.8 115.7 L102.3 94.2 L102.3 128.8 L102.9 91.5 L102.9 120.8 L103.4 91.8 L103.4 125.4 L104.0 90.3 L104.0 127.7 L104.5 92.3 L104.5 120.5 L105.1 91.1 L105.1 118.4 L105.6 62.5 L105.6 108.4 L106.2 61.7 L106.2 96.1 L106.7 62.3 L106.7 92.0 L107.3 67.7 L107.3 107.0 L107.8 62.4 L107.8 90.0 L108.4 66.9 L108.4 98.9 L108.9 64.4 L108.9 90.1 L109.5 66.1 L109.5 94.1 L110.0 62.4 L110.0 102.6 L110.6 69.1 L110.6 89.2 L111.1 63.4 L111.1 105.5 L111.7 62.1 L111.7 97.5 L112.2 63.0 L112.2 97.3 L112.8 65.3 L112.8 92.1 L113.3 61.3 L113.3 85.0 L113.9 67.2 L113.9 84.8 L114.4 61.1 L114.4 105.2 L115.0 63.2 L115.0 96.4 L115.5 61.9 L115.5 99.9 L116.1 64.1 L116.1 87.5 L116.6 71.6 L116.6 104.4 L117.2 59.9 L117.2 109.3 L117.7 66.0 L117.7 93.5 L118.3 61.1 L118.3 121.3 L118.8 66.6 L118.8 82.3 L119.4 66.0 L119.4 85.8 L119.9 67.1 L119.9 94.4 L120.5 60.5 L120.5 89.3 L121.0 68.6 L121.0 100.7 L121.6 68.0 L121.6 94.3 L122.1 63.9 L122.1 90.9 L122.7 66.9 L122.7 98.2 L123.2 68.8 L123.2 94.9 L123.8 59.9 L123.8 92.8 L124.3 62.3 L124.3 108.3 L124.9 67.8 L124.9 93.2 L125.4 66.3 L125.4 93.2 L126.0 65.7 L126.0 93.6 L126.5 66.2 L126.5 88.8 L127.1 65.0 L127.1 94.7 L127.6 63.2 L127.6 96.4 L128.2 60.8 L128.2 88.9 L128.7 65.9 L128.7 89.3 L129.3 64.1 L129.3 96.5 L129.8 69.6 L129.8 96.2 L130.4 65.4 L130.4 88.8 L130.9 67.5 L130.9 87.2 L131.5 65.4 L131.5 101.9 L132.0 67.2 L132.0 96.8 L132.6 62.9 L132.6 104.3 L133.1 60.3 L133.1 85.9 L133.7 64.2 L133.7 89.0 L134.2 65.6 L134.2 86.2 L134.8 64.1 L134.8 87.3 L135.3 65.4 L135.3 89.4 L135.9 68.4 L135.9 110.4 L136.4 68.9 L136.4 94.7 L137.0 62.3 L137.0 84.8 L137.5 65.3 L137.5 128.1 L138.1 64.7 L138.1 90.4 L138.6 63.5 L138.6 95.9 L139.2 64.9 L139.2 93.9 L139.7 63.4 L139.7 84.8 L140.3 64.2 L140.3 92.9 L140.8 64.4 L140.8 87.8 L141.4 66.3 L141.4 85.3 L141.9 65.5 L141.9 94.8 L142.5 64.1 L142.5 87.6 L143.0 66.8 L143.0 91.4 L143.6 66.9 L143.6 85.3 L144.1 67.5 L144.1 91.3 L144.7 63.6 L144.7 112.3 L145.2 68.8 L145.2 95.1 L145.8 68.5 L145.8 97.4 L146.3 60.9 L146.3 90.8 L146.9 70.7 L146.9 83.6 L147.4 63.8 L147.4 102.9 L148.0 61.8 L148.0 94.3 L148.5 62.0 L148.5 87.8 L149.1 63.1 L149.1 103.0 L149.6 67.2 L149.6 105.4 L150.2 66.7 L150.2 91.2 L150.7 66.6 L150.7 92.9 L151.3 62.5 L151.3 95.4 L151.8 63.7 L151.8 100.6 L152.4 66.4 L152.4 115.2 L152.9 68.7 L152.9 106.7 L153.5 63.5 L153.5 88.8 L154.0 63.3 L154.0 107.3 L154.6 65.4 L154.6 96.9 L155.1 61.3 L155.1 88.8 L155.7 66.2 L155.7 99.6 L156.2 64.2 L156.2 88.0 L156.8 62.1 L156.8 102.6 L157.3 64.3 L157.3 97.6 L157.9 64.0 L157.9 102.1 L158.4 65.8 L158.4 96.9 L159.0 62.9 L159.0 104.9 L159.5 64.4 L159.5 102.0 L160.1 69.5 L160.1 87.6 L160.6 67.7 L160.6 97.2 L161.2 64.4 L161.2 91.2 L161.7 65.3 L161.7 90.5 L162.3 62.8 L162.3 104.2 L162.8 65.3 L162.8 85.6 L163.4 65.5 L163.4 95.8 L163.9 59.9 L163.9 103.1 L164.5 64.5 L164.5 133.7 L165.0 64.5 L165.0 92.5 L165.6 64.7 L165.6 100.8 L166.1 64.2 L166.1 87.3 L166.7 64.4 L166.7 90.4 L167.2 64.6 L167.2 105.0 L167.8 64.5 L167.8 86.6 L168.3 65.4 L168.3 95.8 L168.9 64.2 L168.9 100.8 L169.4 67.6 L169.4 110.0 L170.0 62.4 L170.0 111.3 L170.5 69.6 L170.5 92.7 L171.1 65.9 L171.1 93.2 L171.6 69.3 L171.6 88.9 L172.2 66.8 L172.2 96.8 L172.7 64.6 L172.7 92.6 L173.3 65.8 L173.3 93.5 L173.8 69.9 L173.8 91.0 L174.4 63.1 L174.4 95.5 L174.9 64.4 L174.9 93.2 L175.5 63.8 L175.5 87.2 L176.0 64.7 L176.0 87.9 L176.6 62.0 L176.6 85.4 L177.1 65.0 L177.1 104.5 L177.7 62.0 L177.7 87.7 L178.2 67.5 L178.2 86.2 L178.8 65.6 L178.8 93.7 L179.3 64.9 L179.3 98.1 L179.9 66.9 L179.9 88.0 L180.4 82.3 L180.4 113.6 L181.0 79.3 L181.0 106.6 L181.5 77.5 L181.5 103.4 L182.1 64.8 L182.1 98.8 L182.6 65.8 L182.6 89.0 L183.2 66.8 L183.2 108.7 L183.7 65.3 L183.7 93.1 L184.3 60.2 L184.3 89.6 L184.8 63.8 L184.8 90.7 L185.4 64.2 L185.4 107.9 L185.9 65.1 L185.9 85.6 L186.5 65.3 L186.5 97.9 L187.0 65.9 L187.0 81.1 L187.6 66.5 L187.6 99.3 L188.1 65.2 L188.1 92.4 L188.7 63.5 L188.7 99.3 L189.2 61.1 L189.2 84.2 L189.8 67.4 L189.8 96.2 L190.3 65.4 L190.3 110.2 L190.9 64.6 L190.9 108.8 L191.4 61.9 L191.4 85.0 L192.0 65.8 L192.0 89.8 L192.5 67.7 L192.5 88.6 L193.1 60.0 L193.1 87.1 L193.6 62.3 L193.6 96.3 L194.2 65.8 L194.2 96.1 L194.7 63.9 L194.7 84.7 L195.3 64.4 L195.3 88.5 L195.8 70.2 L195.8 86.0 L196.4 63.0 L196.4 97.4 L196.9 64.0 L196.9 79.9 L197.5 61.7 L197.5 104.9 L198.0 64.0 L198.0 116.8 L198.6 63.1 L198.6 91.3 L199.1 61.3 L199.1 87.7 L199.7 66.9 L199.7 85.8 L200.2 68.9 L200.2 101.9 L200.8 66.1 L200.8 91.0 L201.3 65.6 L201.3 94.1 L201.9 70.6 L201.9 92.3 L202.4 61.4 L202.4 112.0 L203.0 62.0 L203.0 90.9 L203.5 63.5 L203.5 94.1 L204.1 63.4 L204.1 111.9 L204.6 60.7 L204.6 111.9 L205.2 64.0 L205.2 83.3 L205.7 69.8 L205.7 83.7 L206.3 66.1 L206.3 82.7 L206.8 69.7 L206.8 96.5 L207.4 64.2 L207.4 87.8 L207.9 63.7 L207.9 85.0 L208.5 66.8 L208.5 99.8 L209.0 68.1 L209.0 104.1 L209.6 66.6 L209.6 95.7 L210.1 62.5 L210.1 95.4 L210.7 62.5 L210.7 92.8 L211.2 61.5 L211.2 115.5 L211.8 63.0 L211.8 89.6 L212.3 64.7 L212.3 87.4 L212.9 64.5 L212.9 97.3 L213.4 71.5 L213.4 86.1 L214.0 68.7 L214.0 86.2 L214.5 63.8 L214.5 96.3 L215.1 66.9 L215.1 101.6 L215.6 62.1 L215.6 98.0 L216.2 66.0 L216.2 89.0 L216.7 64.7 L216.7 83.3 L217.3 67.6 L217.3 97.9 L217.8 66.3 L217.8 88.8 L218.4 67.9 L218.4 116.4 L218.9 64.9 L218.9 88.3 L219.5 65.9 L219.5 101.2 L220.0 69.8 L220.0 91.5 L220.6 67.7 L220.6 93.3 L221.1 60.9 L221.1 106.1 L221.7 65.2 L221.7 90.7 L222.2 63.3 L222.2 102.8 L222.8 68.4 L222.8 99.3 L223.3 65.6 L223.3 91.2 L223.9 64.1 L223.9 98.3 L224.4 64.0 L224.4 94.6 L225.0 65.6 L225.0 96.2 L225.5 66.1 L225.5 101.6 L226.1 65.3 L226.1 93.9 L226.6 67.9 L226.6 91.6 L227.2 67.1 L227.2 89.5 L227.7 60.2 L227.7 90.1 L228.3 71.1 L228.3 94.5 L228.8 64.3 L228.8 83.6 L229.4 61.6 L229.4 81.7 L229.9 68.3 L229.9 88.2 L230.5 64.5 L230.5 126.8 L231.0 62.1 L231.0 98.5 L231.6 69.1 L231.6 99.6 L232.1 65.8 L232.1 88.2 L232.7 65.6 L232.7 87.7 L233.2 60.6 L233.2 100.7 L233.8 64.9 L233.8 81.8 L234.3 60.6 L234.3 103.5 L234.9 69.4 L234.9 91.5 L235.4 62.5 L235.4 94.0 L236.0 61.7 L236.0 97.3 L236.5 65.2 L236.5 102.5 L237.1 64.8 L237.1 82.2 L237.6 65.6 L237.6 100.4 L238.2 66.0 L238.2 91.6 L238.7 62.7 L238.7 120.8 L239.3 66.2 L239.3 86.1 L239.8 69.1 L239.8 88.5 L240.4 67.5 L240.4 96.8 L240.9 69.6 L240.9 86.6 L241.5 65.5 L241.5 88.2 L242.0 62.0 L242.0 86.8 L242.6 64.3 L242.6 85.9 L243.1 61.9 L243.1 98.3 L243.7 63.4 L243.7 91.1 L244.2 63.0 L244.2 84.3 L244.8 67.2 L244.8 94.6 L245.3 66.3 L245.3 96.1 L245.9 69.0 L245.9 83.9 L246.4 63.7 L246.4 103.0 L247.0 62.5 L247.0 104.8 L247.5 67.5 L247.5 97.1 L248.1 70.1 L248.1 125.0 L248.6 70.4 L248.6 88.7 L249.2 64.7 L249.2 102.9 L249.7 66.9 L249.7 102.6 L250.3 66.3 L250.3 86.2 L250.8 66.1 L250.8 96.2 L251.4 63.0 L251.4 94.8 L251.9 64.2 L251.9 86.6 L252.5 64.6 L252.5 88.4 L253.0 65.8 L253.0 98.3 L253.6 63.7 L253.6 101.6 L254.1 61.1 L254.1 94.8 L254.7 60.1 L254.7 112.6 L255.2 62.2 L255.2 86.4 L255.8 90.1 L255.8 125.1 L256.3 87.8 L256.3 112.3 L256.9 91.2 L256.9 111.5 L257.4 89.4 L257.4 126.7 L258.0 91.7 L258.0 127.9 L258.5 89.4 L258.5 118.8 L259.1 93.1 L259.1 118.4 L259.6 92.8 L259.6 115.5 L260.2 95.3 L260.2 124.6 L260.7 95.7 L260.7 115.4 L261.3 93.0 L261.3 115.7 L261.8 101.4 L261.8 145.0 L262.4 98.1 L262.4 118.2 L262.9 94.3 L262.9 125.5 L263.5 95.2 L263.5 120.2 L264.0 95.2 L264.0 126.9 L264.6 100.1 L264.6 133.5 L265.1 101.8 L265.1 121.4 L265.7 99.9 L265.7 123.5 L266.2 102.3 L266.2 123.3 L266.8 102.8 L266.8 120.9 L267.3 103.2 L267.3 116.5 L267.9 100.8 L267.9 131.6 L268.4 102.9 L268.4 141.4 L269.0 102.1 L269.0 118.1 L269.5 104.8 L269.5 147.3 L270.1 110.2 L270.1 143.1 L270.6 121.2 L270.6 148.1 L271.2 128.9 L271.2 160.5 L271.7 142.5 L271.7 160.5 L272.3 147.7 L272.3 160.5 L272.8 145.5 L272.8 160.5 L273.4 151.0 L273.4 160.5 L273.9 152.3 L273.9 160.5 L274.5 147.8 L274.5 160.5 L275.0 154.6 L275.0 160.5 L275.6 156.6 L275.6 160.5 L276.1 152.4 L276.1 160.5 L276.7 156.9 L276.7 160.5 L277.2 158.0 L277.2 160.5 L277.8 150.9 L277.8 160.5 L278.3 153.8 L278.3 160.5 L278.9 155.6 L278.9 160.5 L279.4 153.0 L279.4 160.5 L280.0 157.2 L280.0 160.5 L280.5 154.4 L280.5 160.5 L281.1 153.9 L281.1 160.5 L281.6 153.3 L281.6 160.5 L282.2 151.3 L282.2 160.5 L282.7 159.8 L282.7 160.5 L283.3 156.8 L283.3 160.5 L283.8 154.2 L283.8 160.5 L284.4 160.5 L284.4 160.5 L284.9 157.9 L284.9 160.5 L285.5 157.7 L285.5 160.5 L286.0 156.7 L286.0 160.5 L286.6 159.2 L286.6 160.5 L287.1 158.3 L287.1 160.5 L287.7 153.4 L287.7 160.5 L288.2 154.9 L288.2 160.5 L288.8 150.9 L288.8 160.5 L289.3 155.0 L289.3 160.5 L289.9 155.2 L289.9 160.5 L290.4 155.7 L290.4 160.5 L291.0 154.1 L291.0 160.5 L291.5 158.2 L291.5 160.5 L292.1 155.9 L292.1 160.5 L292.6 158.7 L292.6 160.5 L293.2 153.7 L293.2 160.5 L293.7 153.7 L293.7 160.5 L294.3 154.8 L294.3 160.5 L294.8 155.0 L294.8 160.5 L295.4 151.9 L295.4 160.5 L295.9 158.0 L295.9 160.5 L296.5 155.3 L296.5 160.5 L297.0 153.4 L297.0 160.5 L297.6 156.6 L297.6 160.5 L298.1 159.1 L298.1 160.5 L298.7 156.6 L298.7 160.5 L299.2 157.0 L299.2 160.5 L299.8 157.1 L299.8 160.5 L300.3 155.9 L300.3 160.5 L300.9 156.7 L300.9 160.5 L301.4 153.8 L301.4 160.5 L302.0 154.9 L302.0 160.5 L302.5 159.2 L302.5 160.5 L303.1 151.9 L303.1 160.5 L303.6 158.6 L303.6 160.5 L304.2 156.6 L304.2 160.5 L304.7 154.9 L304.7 160.5 L305.3 156.0 L305.3 160.5 L305.8 154.7 L305.8 160.5 L306.4 155.1 L306.4 160.5 L306.9 152.4 L306.9 160.5 L307.5 155.7 L307.5 160.5 L308.0 155.9 L308.0 160.5 L308.6 157.0 L308.6 160.5 L309.1 160.5 L309.1 160.5 L309.7 157.6 L309.7 160.5 L310.2 156.2 L310.2 160.5 L310.8 154.5 L310.8 160.5 L311.3 158.6 L311.3 160.5 L311.9 160.0 L311.9 160.5 L312.4 156.5 L312.4 160.5 L313.0 156.8 L313.0 160.5 L313.5 152.9 L313.5 160.5 L314.1 156.0 L314.1 160.5 L314.6 155.0 L314.6 160.5 L315.2 158.4 L315.2 160.5 L315.7 156.1 L315.7 160.5 L316.3 158.5 L316.3 160.5 L316.8 155.4 L316.8 160.5 L317.4 155.6 L317.4 160.5 L317.9 157.6 L317.9 160.5 L318.5 158.7 L318.5 160.5 L319.0 153.7 L319.0 160.5 L319.6 155.3 L319.6 160.5 L320.1 157.3 L320.1 160.5 L320.7 159.3 L320.7 160.5 L321.2 160.5 L321.2 160.5 L321.8 156.8 L321.8 160.5 L322.3 157.6 L322.3 160.5 L322.9 152.3 L322.9 160.5 L323.4 155.0 L323.4 160.5 L324.0 156.0 L324.0 160.5 L324.5 155.7 L324.5 160.5 L325.1 158.2 L325.1 160.5 L325.6 152.7 L325.6 160.5 L326.2 153.0 L326.2 160.5 L326.7 157.3 L326.7 160.5 L327.3 152.6 L327.3 160.5 L327.8 158.5 L327.8 160.5 L328.4 155.8 L328.4 160.5 L328.9 158.3 L328.9 160.5 L329.5 158.4 L329.5 160.5 L330.0 151.1 L330.0 160.5 L330.6 155.6 L330.6 160.5 L331.1 160.5 L331.1 160.5 L331.7 155.2 L331.7 160.5 L332.2 154.1 L332.2 160.5 L332.8 154.9 L332.8 160.5 L333.3 159.2 L333.3 160.5 L333.9 158.0 L333.9 160.5 L334.4 157.0 L334.4 160.5 L335.0 155.5 L335.0 160.5 L335.5 151.7 L335.5 160.5 L336.1 157.6 L336.1 160.5 L336.6 156.5 L336.6 160.5 L337.2 155.9 L337.2 160.5 L337.7 150.9 L337.7 160.5 L338.3 153.5 L338.3 160.5 L338.8 160.1 L338.8 160.5 L339.4 156.0 L339.4 160.5 L339.9 155.0 L339.9 160.5 L340.5 157.9 L340.5 160.5 L341.0 152.4 L341.0 160.5 L341.6 154.1 L341.6 160.5 L342.1 157.1 L342.1 160.5 L342.7 152.3 L342.7 160.5 L343.2 155.8 L343.2 160.5 L343.8 151.4 L343.8 160.5 L344.3 157.0 L344.3 160.5 L344.9 154.4 L344.9 160.5 L345.4 154.7 L345.4 160.5 L346.0 156.1 L346.0 160.5 L346.5 158.3 L346.5 160.5 L347.1 152.1 L347.1 160.5 L347.6 159.1 L347.6 160.5 L348.2 155.4 L348.2 160.5 L348.7 155.2 L348.7 160.5 L349.3 157.8 L349.3 160.5 L349.8 154.2 L349.8 160.5 L350.4 160.5 L350.4 160.5 L350.9 156.6 L350.9 160.5 L351.5 153.9 L351.5 160.5 L352.0 154.4 L352.0 160.5 L352.6 157.8 L352.6 160.5 L353.1 150.9 L353.1 160.5 L353.7 154.0 L353.7 160.5 L354.2 152.5 L354.2 160.5 L354.8 159.7 L354.8 160.5 L355.3 156.5 L355.3 160.5 L355.9 151.2 L355.9 160.5 L356.4 154.2 L356.4 160.5 L357.0 151.6 L357.0 160.5 L357.5 153.2 L357.5 160.5 L358.1 158.6 L358.1 160.5 L358.6 160.5 L358.6 160.5 L359.2 155.1 L359.2 160.5 L359.7 156.5 L359.7 160.5 L360.3 157.1 L360.3 160.5 L360.8 157.6 L360.8 160.5 L361.4 155.3 L361.4 160.5" fill="none" stroke="#f8f222" stroke-width="0.85" stroke-linejoin="bevel"/>
    <path d="M-1 157.6H89.5V161.6H-1ZM272.3 157.6H362.9V161.6H272.3Z" fill="#f8f222"/>
  </svg>
  <div class="t xl" style="left:47.3px;top:551.2px;letter-spacing:.55px">中心频率 1.000GHz</div>
  <div class="t xl" style="right:574.6px;top:551.2px;letter-spacing:.8px">频宽 40.000MHz</div>

  <!-- panel 4 content -->
  <div class="t ptitle" style="left:610px;top:361.5px">误差表</div>
  <div class="et g" style="left:568px;top:385.5px">Max</div>
  <div class="et g" style="left:667.5px;top:385.5px">Avg</div>
  <div class="et g" style="left:759.5px;top:385.5px">Limit</div>

  <div class="et g" style="left:429.5px;top:403.9px">RMS EVM:</div>
  <div class="et y" style="left:550.5px;top:403.9px">-46.42dB</div>
  <div class="et y" style="left:649.5px;top:403.9px">-46.42dB</div>
  <div class="et y" style="left:749px;top:403.9px">-25.00dB</div>
  <div class="et y" style="left:561.5px;top:422.3px">0.48%</div>
  <div class="et y" style="left:661px;top:422.3px">0.48%</div>

  <div class="et g" style="left:429.5px;top:440.7px">Peak EVM:</div>
  <div class="et y" style="left:550.5px;top:440.7px">-35.00dB</div>
  <div class="et y" style="left:649.5px;top:440.7px">-35.00dB</div>
  <div class="et y" style="left:561.5px;top:459.1px">1.78%</div>
  <div class="et y" style="left:661px;top:459.1px">1.78%</div>

  <div class="et g" style="left:429.5px;top:477.5px">Pilot EVM:</div>
  <div class="et y" style="left:550.5px;top:477.5px">-46.75dB</div>
  <div class="et y" style="left:649.5px;top:477.5px">-46.75dB</div>
  <div class="et y" style="left:561.5px;top:495.9px">0.46%</div>
  <div class="et y" style="left:661px;top:495.9px">0.46%</div>

  <div class="et g" style="left:429.5px;top:514.3px">Data EVM:</div>
  <div class="et y" style="left:550.5px;top:514.3px">-46.39dB</div>
  <div class="et y" style="left:649.5px;top:514.3px">-46.39dB</div>
  <div class="et y" style="left:561.5px;top:532.7px">0.48%</div>
  <div class="et y" style="left:661px;top:532.7px">0.48%</div>

  <div class="et g" style="left:429.5px;top:547.6px;font-size:14px;transform:none;font-family:'Noto Serif CJK SC','Liberation Mono',serif;">频率误差:</div>
  <div class="et y" style="left:551px;top:551.1px">0.183ppm</div>
  <div class="et y" style="left:650px;top:551.1px">0.183ppm</div>
  <div class="et y" style="left:749.5px;top:551.1px">20.00ppm</div>
  <div class="et y" style="left:551.5px;top:569.5px">18.29Hz</div>
  <div class="et y" style="left:651px;top:569.5px">18.29Hz</div>

  <!-- sidebar -->
  <div id="side"><i></i></div>
  <div class="btn" style="top:30px;height:36.5px;border:1.6px solid #92d2d4;border-radius:5px;background:linear-gradient(to right,#0b5a50 0,#07493f 45%,#053b38 100%);">
    <div class="gl" style="height:7.6px;top:.8px;left:1px;right:1px;background:linear-gradient(to bottom,rgba(205,230,226,.8),rgba(160,200,194,.62) 40%,rgba(120,175,166,.45) 75%,rgba(90,160,150,.1));border-radius:3px 3px 0 0;"></div>
    <div class="h" style="top:11.4px;font-size:17px;">测量设置</div>
  </div>
  <div class="btn" style="top:70.8px;border:2px solid #e09a2c;border-radius:7px;background:linear-gradient(to right,#d49624 0,#b07a1a 12%,#845a10 28%,#553808 50%,#2c1a00 100%);">
    <div class="gl" style="height:19px;background:linear-gradient(to bottom,rgba(215,210,200,.8) 0,rgba(190,182,168,.62) 50%,rgba(165,150,128,.48) 100%);"></div>
    <div class="h" style="top:6.5px;">平均次数</div>
    <div class="h" style="top:26px;font-size:12px;left:-2.6px;">10</div>
    <div class="s" style="left:39.2px;top:49.2px;">开</div>
    <div class="s sel" style="left:91.75px;top:48.5px;">关</div>
  </div>
  <div class="btn" style="top:144px;">
    <div class="gl"></div>
    <div class="h" style="top:10.8px;">平均模式</div>
    <div class="s" style="left:39.1px;top:40.1px;">指数</div>
    <div class="s sel" style="left:92.35px;top:39.9px;">重复</div>
  </div>
  <div class="btn" style="top:217.1px;">
    <div class="gl"></div>
    <div class="h" style="top:23.5px;">测量时间</div>
    <div class="arr" style="left:122px;top:25.5px"></div>
  </div>
  <div class="btn" style="top:290.3px;">
    <div class="gl"></div>
    <div class="h" style="top:11.3px;">子载波</div>
    <div class="s sel" style="left:24.35px;top:39.75px;">全部</div>
    <div class="s" style="left:66.1px;top:40.8px;">导频</div>
    <div class="s" style="left:107.7px;top:40.8px;">单个</div>
  </div>
  <div class="btn" style="top:363.5px;">
    <div class="gl"></div>
    <div class="h" style="top:11.3px;">子载波序号</div>
    <div class="h" style="top:34.8px;font-size:12px;left:-3px;">1</div>
  </div>
  <div class="btn" style="top:436.6px;background:#000;"></div>
  <div class="btn" style="top:509.8px;">
    <div class="gl"></div>
    <div class="h" style="top:24.2px;word-spacing:1px;letter-spacing:.3px">菜单 1/3</div>
    <div class="arr" style="left:121px;top:25.5px"></div>
  </div>

  <div class="a" style="left:0;top:589.3px;width:842px;height:1.5px;background:#e4f2f6;z-index:3"></div>
  <div id="status"><div class="t st">测量中...</div></div>
</div>
</body>
</html>
